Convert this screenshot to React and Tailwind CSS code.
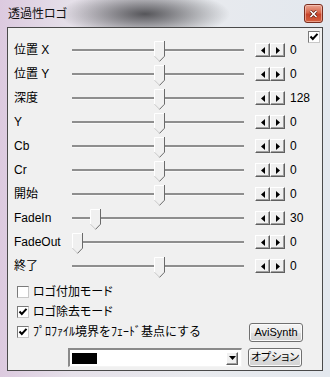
const rows = [
  { label: "位置 X", pos: 82, value: "0" },
  { label: "位置 Y", pos: 82, value: "0" },
  { label: "深度", pos: 82, value: "128" },
  { label: "Y", pos: 82, value: "0" },
  { label: "Cb", pos: 82, value: "0" },
  { label: "Cr", pos: 82, value: "0" },
  { label: "開始", pos: 82, value: "0" },
  { label: "FadeIn", pos: 18, value: "30" },
  { label: "FadeOut", pos: 0, value: "0" },
  { label: "終了", pos: 82, value: "0" },
];

function Thumb() {
  return (
    <svg width="11" height="21" viewBox="0 0 11 21">
      <polygon points="0,0 11,0 11,15 5.5,20.5 0,15" fill="#f0f0f0" />
      <polyline points="0.5,15.2 0.5,0.5 10,0.5" fill="none" stroke="#ffffff" />
      <polyline points="0.5,15.2 5.5,20.2" fill="none" stroke="#c8c8c8" />
      <polyline points="10.5,0 10.5,15.2 5.5,20.4" fill="none" stroke="#6a6a6a" />
    </svg>
  );
}

function Slider({ pos }) {
  return (
    <div className="relative w-[174px] h-full flex items-center">
      <div className="w-[172px] h-[3px] border-t-2 border-t-[#8e8e8e] border-b border-b-[#f8f8f8]" />
      <div className="absolute top-[3px]" style={{ left: pos }}>
        <Thumb />
      </div>
    </div>
  );
}

function SpinBtn({ dir }) {
  return (
    <div className="w-[15px] h-[14px] flex items-center justify-center bg-[#f0f0f0] border border-t-white border-l-white border-r-[#5f5f5f] border-b-[#5f5f5f] shadow-[inset_-1px_-1px_0_#a0a0a0]">
      <svg width="4" height="7" viewBox="0 0 4 7">
        <polygon points={dir === "l" ? "4,0 4,7 0,3.5" : "0,0 0,7 4,3.5"} fill="#000" />
      </svg>
    </div>
  );
}

function Check({ checked }) {
  return (
    <div className="w-[12px] h-[12px] shrink-0 bg-white border border-t-[#7a7a7a] border-l-[#7a7a7a] border-r-[#c8c8c8] border-b-[#c8c8c8] flex items-center justify-center">
      {checked && (
        <svg width="10" height="10" viewBox="0 0 10 10">
          <polyline points="1.5,4.5 3.8,7 8.5,1.8" fill="none" stroke="#000" strokeWidth="2" />
        </svg>
      )}
    </div>
  );
}

function Button({ children }) {
  return (
    <div className="w-[54px] h-[19px] shrink-0 whitespace-nowrap rounded-[3px] border border-[#707070] bg-[linear-gradient(#f4f4f4,#ececec_50%,#dedede_50%,#d2d2d2)] shadow-[inset_0_0_0_1px_#fbfbfb] flex items-center justify-center text-[11px] text-black [font-feature-settings:'palt']">
      {children}
    </div>
  );
}

export default function App() {
  return (
    <div className="w-[330px] h-[377px] flex flex-col font-['Liberation_Sans','Noto_Sans_CJK_JP',sans-serif] bg-[radial-gradient(ellipse_85px_24px_at_145px_14px,rgba(60,60,64,0.85),rgba(70,70,74,0.4)_55%,rgba(70,70,74,0)),linear-gradient(90deg,#dccadf,#e5e0e9_22%,#e8eaee_60%,#e3e8ee)]">
      {/* title bar */}
      <div className="h-[27px] flex items-center justify-between pl-[8px] pr-[7px]">
        <span className="text-[12px] text-[#111] [font-feature-settings:'palt']">透過性ロゴ</span>
        <div className="w-[19px] h-[19px] rounded-[3px] border border-[#7a2e1f] bg-[linear-gradient(#eaa592,#d8664a_45%,#c7432a_55%,#d5613f)] shadow-[inset_0_0_0_1px_rgba(255,220,210,0.5)] flex items-center justify-center">
          <svg width="9" height="8" viewBox="0 0 9 8">
            <path d="M1.5 1 L7.5 7 M7.5 1 L1.5 7" stroke="#5a1a10" strokeWidth="3" />
            <path d="M1.5 1 L7.5 7 M7.5 1 L1.5 7" stroke="#ffffff" strokeWidth="1.6" />
          </svg>
        </div>
      </div>

      {/* client area */}
      <div className="relative mx-[7px] h-[344px] border border-[#4a4a4a] bg-[#f0f0f0] text-[12px] text-black flex flex-col">
        <div className="absolute top-[3px] right-[2px]">
          <Check checked />
        </div>

        <div className="pt-[10px] flex flex-col">
          {rows.map((r) => (
            <div key={r.label} className="h-[24px] flex items-center pl-[6px]">
              <div className="w-[58px]">{r.label}</div>
              <Slider pos={r.pos} />
              <div className="ml-[9px] flex">
                <SpinBtn dir="l" />
                <SpinBtn dir="r" />
              </div>
              <div className="ml-[5px]">{r.value}</div>
            </div>
          ))}
        </div>

        <div className="mt-[4px] flex flex-col">
          <div className="h-[20px] flex items-center pl-[9px]">
            <Check />
            <span className="ml-[4px] [font-feature-settings:'palt']">ロゴ付加モード</span>
          </div>
          <div className="h-[20px] flex items-center pl-[9px]">
            <Check checked />
            <span className="ml-[4px] [font-feature-settings:'palt']">ロゴ除去モード</span>
          </div>
          <div className="h-[20px] flex items-center pl-[9px]">
            <Check checked />
            <span className="ml-[4px] flex-1 whitespace-nowrap">ﾌﾟﾛﾌｧｲﾙ境界をﾌｪｰﾄﾞ基点にする</span>
            <div className="mr-[19px]">
              <Button>AviSynth</Button>
            </div>
          </div>
        </div>

        <div className="mt-[6px] flex items-center">
          <div className="ml-[60px] w-[174px] h-[19px] shrink-0 bg-white border-t-2 border-l-2 border-t-[#8a8a8a] border-l-[#8a8a8a] border-r border-b border-r-[#f4f4f4] border-b-[#f4f4f4] flex items-center pl-[2px] pr-[3px]">
            <div className="w-[25px] h-[11px] bg-black" />
            <div className="ml-auto w-[12px] h-[13px] flex items-center justify-center bg-[#f0f0f0] border border-t-white border-l-white border-r-[#5f5f5f] border-b-[#5f5f5f] shadow-[inset_-1px_-1px_0_#a0a0a0]">
              <svg width="7" height="4" viewBox="0 0 7 4">
                <polygon points="0,0 7,0 3.5,4" fill="#000" />
              </svg>
            </div>
          </div>
          <div className="ml-[6px]">
            <Button>オプション</Button>
          </div>
        </div>
      </div>
    </div>
  );
}
